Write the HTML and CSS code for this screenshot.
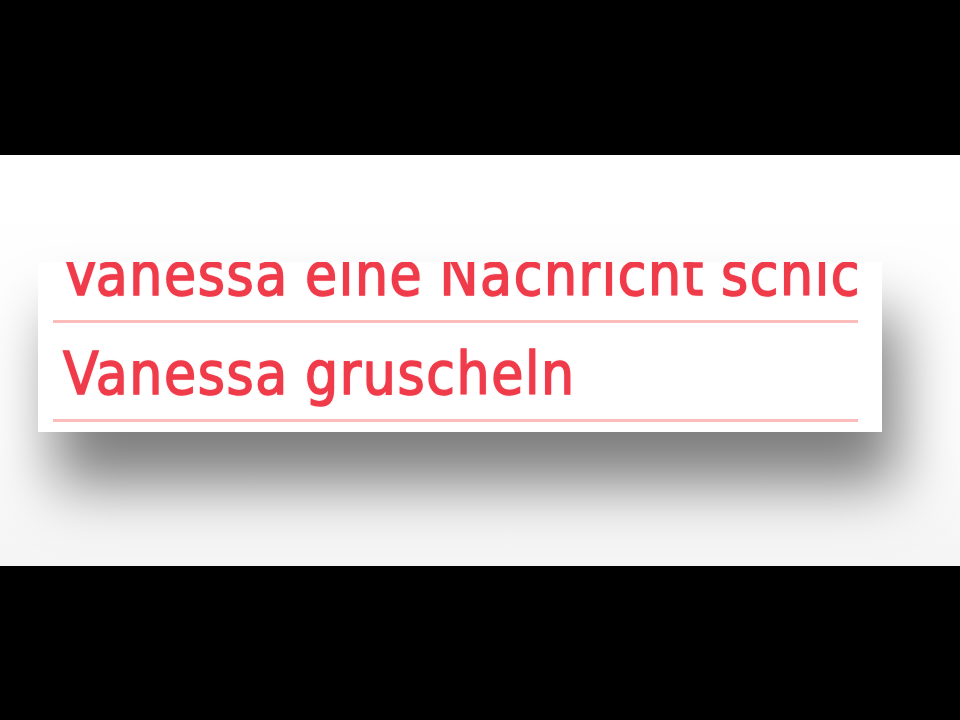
FILE: index.html
```html
<!DOCTYPE html>
<html lang="de">
<head>
<meta charset="utf-8">
<title>Vanessa</title>
<link rel="stylesheet" href="styles.css">
</head>
<body>
<div class="band band-top"></div>
<main class="stage">
  <div class="card">
    <ul class="menu">
      <li class="item"><span class="label">Vanessa eine Nachricht schicken</span></li>
      <li class="item"><span class="label">Vanessa gruscheln</span></li>
    </ul>
  </div>
</main>
<div class="band band-bottom"></div>
</body>
</html>
```
FILE: styles.css
```css
html, body {
  margin: 0;
  padding: 0;
  background: #000;
  width: 960px;
  height: 720px;
  overflow: hidden;
}
body {
  display: flex;
  flex-direction: column;
  font-family: "DejaVu Sans Condensed", "DejaVu Sans", sans-serif;
}
.band-top { height: 155px; flex: none; }
.band-bottom { flex: 1; }
.stage {
  height: 411px;
  flex: none;
  background: linear-gradient(#ffffff, #fcfcfc 70%, #f4f4f4);
  padding-top: 107px;
  padding-left: 38px;
  box-sizing: border-box;
}
.card {
  width: 844px;
  height: 170px;
  background: #fff;
  overflow: hidden;
  box-shadow: 16px 52px 60px rgba(0, 0, 0, 0.5);
  padding: 0 24px 0 15px;
  box-sizing: border-box;
}
.menu {
  list-style: none;
  margin: -38px 0 0 0;
  padding: 0;
}
.item {
  box-sizing: border-box;
  height: 99px;
  padding-top: 6px;
  border-bottom: 3px solid #fbbcbc;
  overflow: hidden;
  white-space: nowrap;
}
.label {
  display: block;
  padding-left: 10px;
  font-size: 58px;
  line-height: 90px;
  letter-spacing: 1.6px;
  word-spacing: -2px;
  color: #ef3b4a;
  -webkit-text-stroke: 1.4px #ef3b4a;
  text-shadow: 0 0 2px rgba(239, 59, 74, 0.6);
}
```
